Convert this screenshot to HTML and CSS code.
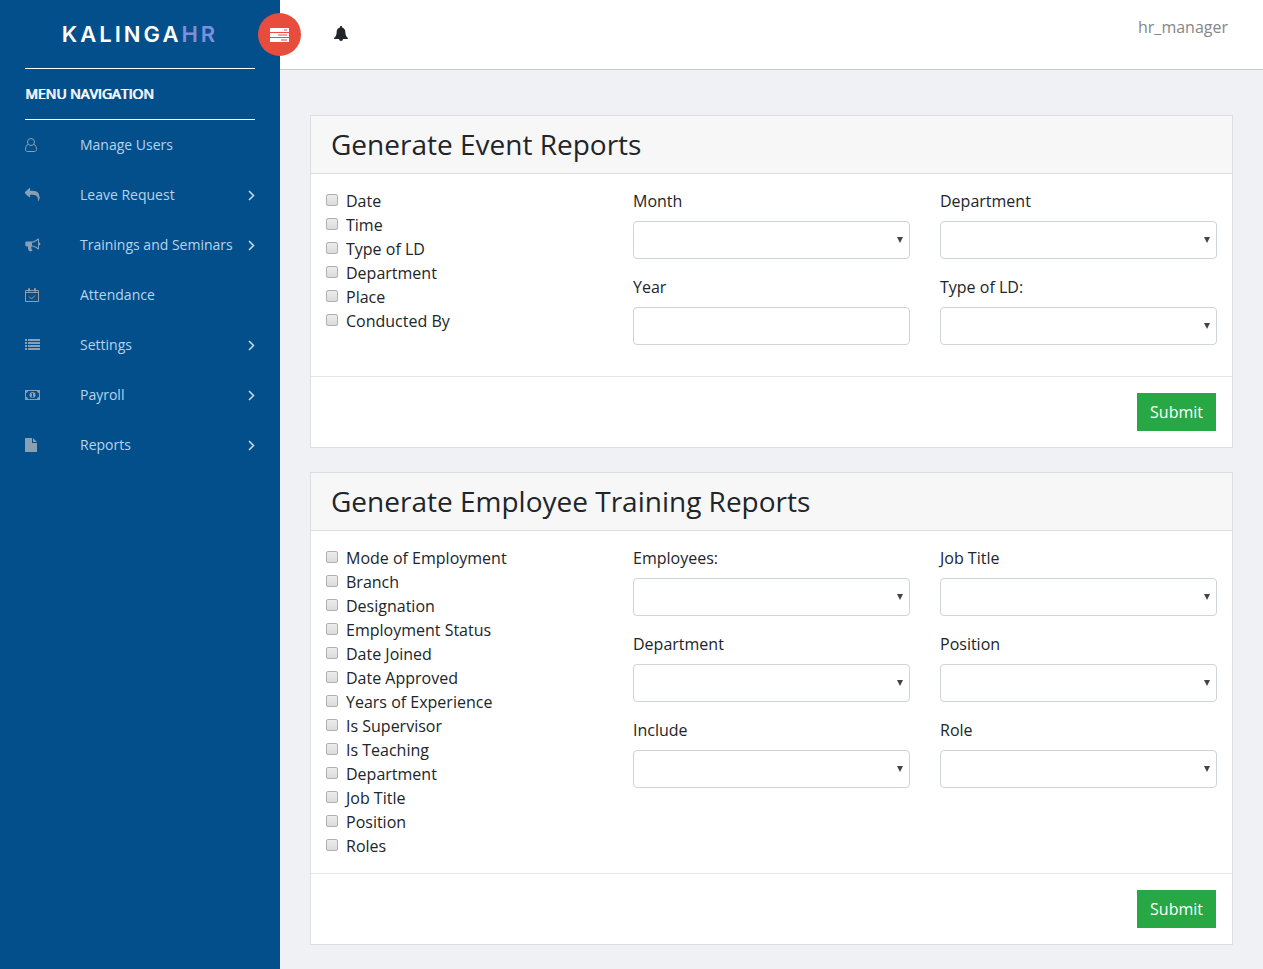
FILE: index.html
```html
<!DOCTYPE html>
<html lang="en">
<head>
    <meta charset="UTF-8">
    <meta name="viewport" content="width=device-width, initial-scale=1.0">
    <title>KalingaHR - Reports</title>
    <link rel="stylesheet" href="styles.css">
</head>
<body>
    <div class="page">
        <nav class="sidebar">
            <a href="#" class="brand">KALINGA<span class="brand-hr">HR</span></a>
            <h2 class="menu-title">MENU NAVIGATION</h2>
            <ul class="menu">
                <li><a href="#">
                    <svg class="icon" viewBox="0 0 16 16"><g fill="none" stroke="currentColor"><circle cx="6" cy="5" r="3.500"/><path d="M3 7.500C1.200 8 .5 10 .5 12.500c0 1.300.8 2 2 2h7c1.200 0 2-.7 2-2 0-2.500-.7-4.500-2.500-5"/></g></svg>
                    <span>Manage Users</span>
                </a></li>
                <li><a href="#">
                    <svg class="icon" viewBox="0 0 1792 1792"><path d="M1664 1120q0 166-127 451-3 7-10.500 24t-13.500 30-13 22q-12 17-28 17-15 0-23.500-10t-8.500-25q0-9 2.500-26.500t2.500-23.500q5-68 5-123 0-112-19.500-200.500t-54-153.500-89-112-116-76.500-143-41.500-163-18.500-68-5h-224v256q0 26-19 45t-45 19-45-19l-512-512q-19-19-19-45t19-45l512-512q19-19 45-19t45 19 19 45v256h224q585 0 747 403 53 134 53 333z" transform="translate(0 110) scale(1 .9)"/></svg>
                    <span>Leave Request</span>
                    <svg class="arrow" viewBox="0 0 8 12"><path d="M2 2l4.500 4.500L2 11"/></svg>
                </a></li>
                <li><a href="#">
                    <svg class="icon" viewBox="0 0 16 16"><path fill-rule="evenodd" d="M13 1.500c.6 0 1 .4 1 1v3a1.300 1.300 0 0 1 0 2.800v3.200c0 .6-.4 1-1 1-2-1.700-4-2.700-6-3-.8.3-1 1.200-.4 1.800-.5.8.1 1.300 1 2-.6 1.200-3 1.200-3.800.4-.5-1.600-1.200-2.700-.7-4.300H1.800C.9 9.400.3 8.800.3 8V6c0-.8.6-1.400 1.500-1.400H6c2.400 0 4.800-1.200 7-3.100zM13 3C11 4.600 9 5.500 7 5.700v2.700c2 .2 4 1.100 6 2.600z"/></svg>
                    <span>Trainings and Seminars</span>
                    <svg class="arrow" viewBox="0 0 8 12"><path d="M2 2l4.500 4.500L2 11"/></svg>
                </a></li>
                <li><a href="#">
                    <svg class="icon" viewBox="0 0 16 16"><g fill="none" stroke="currentColor"><path d="M.5 3.500h13v11H.5zM.5 5.500h13M3.500 4.500v-3h1v3M9.500 4.500v-3h1v3M4 9.500l2.500 2.500L10 8.500"/></g></svg>
                    <span>Attendance</span>
                </a></li>
                <li><a href="#">
                    <svg class="icon" viewBox="0 0 16 16"><path d="M0 2h2v2H0zM3 2h12v2H3zM0 5h2v2H0zM3 5h12v2H3zM0 8h2v2H0zM3 8h12v2H3zM0 11h2v2H0zM3 11h12v2H3z"/></svg>
                    <span>Settings</span>
                    <svg class="arrow" viewBox="0 0 8 12"><path d="M2 2l4.500 4.500L2 11"/></svg>
                </a></li>
                <li><a href="#">
                    <svg class="icon" viewBox="0 0 16 16"><path fill-rule="evenodd" d="M0 3h15v10H0zM3 4c0 1.200-.8 2-2 2v4c1.200 0 2 .8 2 2h9c0-1.200.8-2 2-2V6c-1.200 0-2-.8-2-2z"/><ellipse cx="7.500" cy="8" rx="3" ry="3"/><path class="icon-cut" d="M6.500 7l1-1v4M6.500 10h2"/></svg>
                    <span>Payroll</span>
                    <svg class="arrow" viewBox="0 0 8 12"><path d="M2 2l4.500 4.500L2 11"/></svg>
                </a></li>
                <li><a href="#">
                    <svg class="icon" viewBox="0 0 16 16"><path d="M0 1h7v5h5v9H0zM8 1l4 4H8z"/></svg>
                    <span>Reports</span>
                    <svg class="arrow" viewBox="0 0 8 12"><path d="M2 2l4.500 4.500L2 11"/></svg>
                </a></li>
            </ul>
        </nav>

        <div class="main">
            <header class="topbar">
                <button type="button" class="toggle" aria-label="Toggle menu">
                    <svg viewBox="0 0 20 16"><path fill="#fff" d="M0 1h19v4H0zM0 6h19v4H0zM0 11h19v4H0z"/><path stroke="#e84c3d" d="M14 3h3M8 8h9M11 13h6"/></svg>
                </button>
                <button type="button" class="bell" aria-label="Notifications">
                    <svg viewBox="0 0 16 16"><path d="M8 0c.6 0 1 .4 1 1v.4c2 .4 3.300 2 3.300 4.100 0 3.400.9 5.300 2.700 6.500 0 .6-.4 1-1 1h-4a2 2 0 0 1-4 0H2c-.6 0-1-.4-1-1 1.800-1.200 2.700-3.100 2.700-6.500C3.700 3.400 5 1.800 7 1.400V1c0-.6.400-1 1-1z"/></svg>
                </button>
                <a href="#" class="user">hr_manager</a>
            </header>

            <main class="content">
                <form class="card">
                    <h3 class="card-header">Generate Event Reports</h3>
                    <div class="card-body">
                        <div class="checks">
                            <label><input type="checkbox">Date</label>
                            <label><input type="checkbox">Time</label>
                            <label><input type="checkbox">Type of LD</label>
                            <label><input type="checkbox">Department</label>
                            <label><input type="checkbox">Place</label>
                            <label><input type="checkbox">Conducted By</label>
                        </div>
                        <div class="fields">
                            <div class="form-group">
                                <label for="month">Month</label>
                                <div class="select"><select id="month"></select></div>
                            </div>
                            <div class="form-group">
                                <label for="year">Year</label>
                                <input type="text" id="year">
                            </div>
                        </div>
                        <div class="fields">
                            <div class="form-group">
                                <label for="event-department">Department</label>
                                <div class="select"><select id="event-department"></select></div>
                            </div>
                            <div class="form-group">
                                <label for="type-ld">Type of LD:</label>
                                <div class="select"><select id="type-ld"></select></div>
                            </div>
                        </div>
                    </div>
                    <div class="card-footer">
                        <button type="submit" class="btn">Submit</button>
                    </div>
                </form>

                <form class="card">
                    <h3 class="card-header">Generate Employee Training Reports</h3>
                    <div class="card-body">
                        <div class="checks">
                            <label><input type="checkbox">Mode of Employment</label>
                            <label><input type="checkbox">Branch</label>
                            <label><input type="checkbox">Designation</label>
                            <label><input type="checkbox">Employment Status</label>
                            <label><input type="checkbox">Date Joined</label>
                            <label><input type="checkbox">Date Approved</label>
                            <label><input type="checkbox">Years of Experience</label>
                            <label><input type="checkbox">Is Supervisor</label>
                            <label><input type="checkbox">Is Teaching</label>
                            <label><input type="checkbox">Department</label>
                            <label><input type="checkbox">Job Title</label>
                            <label><input type="checkbox">Position</label>
                            <label><input type="checkbox">Roles</label>
                        </div>
                        <div class="fields">
                            <div class="form-group">
                                <label for="employees">Employees:</label>
                                <div class="select"><select id="employees"></select></div>
                            </div>
                            <div class="form-group">
                                <label for="department">Department</label>
                                <div class="select"><select id="department"></select></div>
                            </div>
                            <div class="form-group">
                                <label for="include">Include</label>
                                <div class="select"><select id="include"></select></div>
                            </div>
                        </div>
                        <div class="fields">
                            <div class="form-group">
                                <label for="job-title">Job Title</label>
                                <div class="select"><select id="job-title"></select></div>
                            </div>
                            <div class="form-group">
                                <label for="position">Position</label>
                                <div class="select"><select id="position"></select></div>
                            </div>
                            <div class="form-group">
                                <label for="role">Role</label>
                                <div class="select"><select id="role"></select></div>
                            </div>
                        </div>
                    </div>
                    <div class="card-footer">
                        <button type="submit" class="btn">Submit</button>
                    </div>
                </form>
            </main>
        </div>
    </div>
</body>
</html>
```

FILE: styles.css
```css
* {
    box-sizing: border-box;
}

body {
    margin: 0;
    font-family: "Open Sans", sans-serif;
    font-size: 16px;
    line-height: 24px;
    color: #212529;
    background-color: #eff1f5;
}

a {
    color: inherit;
    text-decoration: none;
}

.page {
    display: flex;
    min-height: 100vh;
}

/* sidebar */
.sidebar {
    flex: 0 0 280px;
    padding: 0 25px;
    background-color: #034f8b;
    color: #fff;
}

.brand {
    display: flex;
    align-items: center;
    justify-content: center;
    height: 68px;
    font-family: Inter, sans-serif;
    font-size: 22px;
    font-weight: 600;
    letter-spacing: 3px;
}

.brand-hr {
    color: #7f8fd9;
}

.menu-title {
    margin: 0;
    padding: 13px 0;
    border-top: 1px solid #fff;
    border-bottom: 1px solid #fff;
    font-size: 14px;
    font-weight: 400;
    text-shadow: 1px 0 #fff;
}

.menu {
    margin: 0;
    padding: 0;
    list-style: none;
    font-size: 14px;
    color: #b9d3ea;
}

.menu a {
    display: flex;
    align-items: center;
    height: 50px;
}

.menu span {
    flex: 1;
    white-space: nowrap;
}

.icon {
    width: 16px;
    height: 16px;
    margin-right: 39px;
    fill: currentColor;
    color: #8b9fb3;
}

.icon-cut {
    fill: none;
    stroke: #034f8b;
}

.arrow {
    width: 8px;
    height: 12px;
    overflow: visible;
    fill: none;
    stroke: #c9dced;
    stroke-width: 1.5;
}

/* top bar */
.main {
    flex: 1;
    min-width: 0;
}

.topbar {
    position: relative;
    display: flex;
    align-items: flex-start;
    height: 70px;
    padding: 0 35px 0 53px;
    border-bottom: 1px solid #c8cacd;
    background-color: #fff;
}

.toggle {
    position: absolute;
    top: 13px;
    left: -22px;
    display: flex;
    align-items: center;
    justify-content: center;
    width: 43px;
    height: 43px;
    padding: 0;
    border: none;
    border-radius: 50%;
    background-color: #e84c3d;
    cursor: pointer;
}

.toggle svg {
    width: 20px;
    height: 16px;
}

.bell {
    display: flex;
    margin-top: 26px;
    padding: 0;
    border: none;
    background: none;
    cursor: pointer;
}

.bell svg {
    width: 16px;
    height: 16px;
    fill: #212529;
}

.user {
    margin: 15px 0 0 auto;
    color: #868686;
}

/* report cards */
.content {
    display: grid;
    gap: 24px;
    padding: 45px 30px 24px;
}

.card {
    border: 1px solid #dcdee1;
    background-color: #fff;
}

.card-header {
    margin: 0;
    padding: 12px 20px;
    border-bottom: 1px solid #dcdee1;
    background-color: #f7f7f7;
    font-size: 28px;
    font-weight: 400;
    line-height: 33px;
}

.card-body {
    display: grid;
    grid-template-columns: repeat(3, 1fr);
    gap: 30px;
    padding: 15px;
}

.checks label {
    display: flex;
    align-items: flex-start;
}

.checks input {
    appearance: none;
    width: 12px;
    height: 12px;
    margin: 5px 8px 0 0;
    border: 1px solid #b0b0b0;
    border-radius: 2px;
    background: linear-gradient(#ececec, #dcdcdc);
}

.checks input:checked {
    background: #28a745;
}

.form-group {
    margin-bottom: 16px;
}

.form-group label {
    display: block;
    margin-bottom: 8px;
}

.form-group input,
.form-group select {
    display: block;
    appearance: none;
    width: 100%;
    height: 38px;
    padding: 6px 12px;
    border: 1px solid #ced4da;
    border-radius: 4px;
    background-color: #fff;
    font: inherit;
    color: #495057;
}

.select {
    position: relative;
}

.select::after {
    content: "";
    position: absolute;
    top: 16px;
    right: 7px;
    border: 3px solid transparent;
    border-top: 6px solid #444;
    border-bottom: none;
    pointer-events: none;
}

.card-footer {
    display: flex;
    justify-content: flex-end;
    padding: 16px;
    border-top: 1px solid #e4e6e8;
}

.btn {
    padding: 6px 12px;
    border: 1px solid #28a745;
    background-color: #28a745;
    color: #fff;
    font: inherit;
    cursor: pointer;
}

.btn:hover {
    background-color: #218838;
}
```
